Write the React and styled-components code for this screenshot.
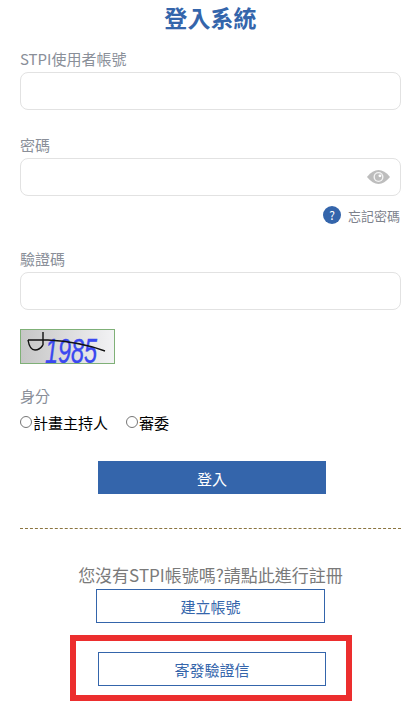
import React from 'react';
import styled, { createGlobalStyle } from 'styled-components';

const GlobalStyle = createGlobalStyle`
  html, body {
    margin: 0;
    padding: 0;
    background: #fff;
    font-family: "Noto Sans CJK TC", "Noto Sans", sans-serif;
    overflow: hidden;
  }
`

const Eye = () => (
  <svg width="25" height="16" viewBox="0 0 26 16">
    <path d="M1 8C5 3 9 .8 13 .8S21 3 25 8c-4 5-8 7.200-12 7.200S5 13 1 8z" fill="#bdbdbd" />
    <circle cx="13" cy="8" r="5.200" fill="#f4f4f4" />
    <circle cx="13" cy="8" r="3.800" fill="#bdbdbd" />
    <circle cx="14.500" cy="6.800" r="1.500" fill="#fff" />
  </svg>
);

const Captcha = () => (
  <CaptchaBox>
    <svg width="93" height="33" viewBox="0 0 93 33">
      <defs>
        <linearGradient id="captchaBg" x1="0" x2="1" y1="0" y2="0">
          <stop offset="0" stopColor="#c6c6c6" />
          <stop offset="1" stopColor="#f2f2f4" />
        </linearGradient>
      </defs>
      <rect width="93" height="33" fill="url(#captchaBg)" />
      <text
        x="24"
        y="33"
        fill="#3a48f0"
        stroke="#3a48f0"
        strokeWidth="0.4"
        fontFamily="Liberation Sans"
        fontStyle="italic"
        fontSize="35"
        textLength="52"
        lengthAdjust="spacingAndGlyphs"
      >
        1985
      </text>
      <path d="M7 10H27C46 11 65 14 84 21M7 10c1 6 3 10 7 10 3 0 6-2 8-5M22 2v13" fill="none" stroke="#111" strokeWidth="1.400" />
    </svg>
  </CaptchaBox>
);

const App = () => {
  return (
    <Page>
      <GlobalStyle />
      <Title>登入系統</Title>

      <Label>STPI使用者帳號</Label>
      <Input />

      <Label $top={25}>密碼</Label>
      <InputWrap>
        <Input />
        <EyeButton><Eye /></EyeButton>
      </InputWrap>
      <ForgotRow>
        <HelpIcon>?</HelpIcon>
        <span>忘記密碼</span>
      </ForgotRow>

      <Label $top={24}>驗證碼</Label>
      <Input />
      <Captcha />

      <Label $top={22}>身分</Label>
      <RadioRow>
        <RadioItem><RadioDot />計畫主持人</RadioItem>
        <RadioItem><RadioDot />審委</RadioItem>
      </RadioRow>

      <LoginButton>登入</LoginButton>
      <Divider />

      <RegisterText>您沒有STPI帳號嗎?請點此進行註冊</RegisterText>
      <CreateRow>
        <OutlineButton $width={229}>建立帳號</OutlineButton>
      </CreateRow>
      <Highlight>
        <OutlineButton $width={228}>寄發驗證信</OutlineButton>
      </Highlight>
    </Page>
  );
};

export default App;

const Page = styled.div`
  width: 413px;
  height: 705px;
  box-sizing: border-box;
  padding: 0 12px 0 20px;
  display: flex;
  flex-direction: column;
  overflow: hidden;
`

const Title = styled.h1`
  margin: 2px 0 0;
  height: 34px;
  line-height: 30px;
  font-size: 23px;
  font-weight: 700;
  letter-spacing: 0.1px;
  color: #3465ab;
  text-align: center;
`

const Label = styled.label`
  display: block;
  margin-top: ${props => props.$top || 13}px;
  height: 23px;
  line-height: 19px;
  font-size: 15px;
  color: #8a8f99;
`

const Input = styled.div`
  box-sizing: border-box;
  width: 381px;
  height: 38px;
  border: 1px solid #e2e2e2;
  border-radius: 8px;
  background: #fff;
`

const InputWrap = styled.div`
  position: relative;
  width: 381px;
`

const EyeButton = styled.span`
  position: absolute;
  right: 10px;
  top: 11px;
  display: flex;
`

const ForgotRow = styled.div`
  width: 380px;
  margin-top: 9px;
  height: 20px;
  display: flex;
  justify-content: flex-end;
  align-items: center;
  gap: 7px;
  font-size: 13px;
  line-height: 17px;
  color: #7d828c;
`

const HelpIcon = styled.span`
  width: 18px;
  height: 18px;
  border-radius: 50%;
  background: #3465ab;
  color: #fff;
  font-size: 12px;
  line-height: 18px;
  text-align: center;
`

const CaptchaBox = styled.div`
  width: 93px;
  height: 33px;
  margin-top: 19px;
  border: 1px solid #7fb077;
  display: flex;
`

const RadioRow = styled.div`
  display: flex;
  gap: 18px;
  height: 25px;
  align-items: center;
  margin-top: 1px;
`

const RadioItem = styled.span`
  display: flex;
  align-items: center;
  gap: 1px;
  font-size: 15px;
  color: #000;
`

const RadioDot = styled.span`
  box-sizing: border-box;
  width: 12px;
  height: 12px;
  margin-top: -2px;
  border: 1px solid #767676;
  border-radius: 50%;
  background: #fff;
`

const LoginButton = styled.div`
  width: 228px;
  height: 33px;
  margin: 26px 0 0 78px;
  background: #3465ab;
  color: #fff;
  font-size: 15px;
  line-height: 35px;
  text-align: center;
`

const Divider = styled.div`
  width: 381px;
  margin-top: 34px;
  border-top: 1px dashed #8a7440;
`

const RegisterText = styled.div`
  margin-top: 35px;
  width: 381px;
  height: 25px;
  line-height: 22px;
  font-size: 17px;
  color: #7a7a7a;
  text-align: center;
`

const CreateRow = styled.div`
  padding-left: 76px;
`

const OutlineButton = styled.div`
  box-sizing: border-box;
  width: ${props => props.$width}px;
  height: 34px;
  border: 1px solid #3465ab;
  color: #3465ab;
  font-size: 15px;
  line-height: 33px;
  text-align: center;
`

const Highlight = styled.div`
  box-sizing: border-box;
  width: 282px;
  height: 66px;
  margin: 12px 0 0 50px;
  padding: 11px 0 0 22px;
  border: 6px solid #ec2e2e;
`
